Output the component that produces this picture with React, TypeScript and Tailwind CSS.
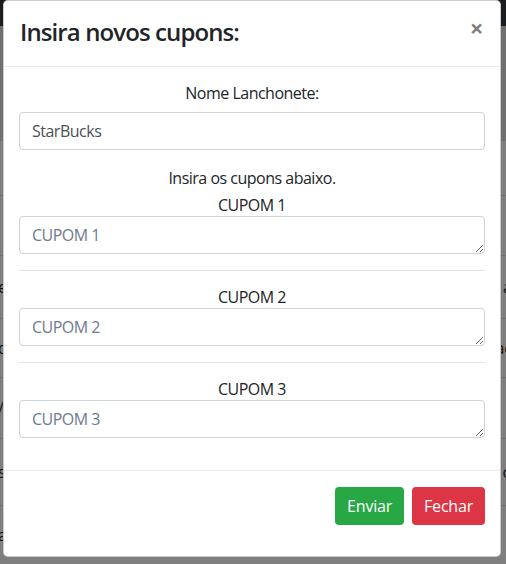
const rows = [
  { h: "h-[55px]", left: "", right: "" },
  { h: "h-[60px]", left: "", right: "" },
  { h: "h-[63px]", left: "e", right: "a" },
  { h: "h-[59px]", left: "d", right: "ac" },
  { h: "h-[61px]", left: "/", right: "" },
  { h: "h-[67px]", left: "s", right: "o" },
  { h: "h-[59px]", left: "a", right: "" },
];

const cupons = ["CUPOM 1", "CUPOM 2", "CUPOM 3"];

export default function App() {
  return (
    <div className="relative w-[506px] h-[564px] overflow-hidden bg-white font-['Open_Sans',sans-serif] text-[#212529]">
      {/* page behind the modal */}
      <div className="h-[26px] bg-[#343a40]" />
      <div className="h-[114px] bg-[#e0e0e0]" />
      {rows.map((r, i) => (
        <div key={i} className={`${r.h} border-t border-[#dee2e6] flex items-center justify-between text-[16px]`}>
          <span className="-ml-[2px]">{r.left}</span>
          <span className="-mr-[6px]">{r.right}</span>
        </div>
      ))}

      {/* backdrop */}
      <div className="absolute inset-0 bg-black/50" />

      {/* modal */}
      <div className="absolute left-[3px] top-0 w-[498px] bg-white border border-black/20 rounded-[5px] flex flex-col tracking-[-0.5px]">
        <div className="flex items-start justify-between px-4 pt-4 border-b border-[#e9ecef] h-[66px]">
          <h4 className="text-[24px] leading-[36px] font-semibold tracking-[-0.9px] -mt-[3px]">Insira novos cupons:</h4>
          <button className="text-[24px] leading-[24px] font-bold text-black/50 -mt-[1px] mr-[1px]">×</button>
        </div>

        <div className="px-[15px] pt-4 pb-8 text-[16px]">
          <div className="text-center leading-[21px] mb-2">Nome Lanchonete:</div>
          <input
            defaultValue="StarBucks"
            className="block w-full h-[38px] px-3 border border-[#ced4da] rounded-[4px] text-[#495057] leading-[24px] outline-none"
          />
          <div className="text-center leading-[24px] mt-4">Insira os cupons abaixo.</div>
          {cupons.map((c, i) => (
            <div key={c}>
              {i > 0 && <hr className="my-4 border-t border-[#e4e7ea]" />}
              <div className={`text-center leading-[21px] ${i === 0 ? "mt-[5px]" : ""}`}>{c}</div>
              <textarea
                rows={1}
                placeholder={c}
                className="block w-full h-[38px] px-3 py-[6px] border border-[#ced4da] rounded-[4px] leading-[24px] text-[#495057] placeholder:text-[#6c7a8f] outline-none"
              />
            </div>
          ))}
        </div>

        <div className="border-t border-[#e9ecef] flex justify-end gap-2 pt-4 pb-[31px] pr-[15px] tracking-[-0.2px]">
          <button className="h-[38px] px-3 rounded-[4px] bg-[#28a745] text-white text-[16px]">Enviar</button>
          <button className="h-[38px] px-3 rounded-[4px] bg-[#dc3545] text-white text-[16px]">Fechar</button>
        </div>
      </div>
    </div>
  );
}
